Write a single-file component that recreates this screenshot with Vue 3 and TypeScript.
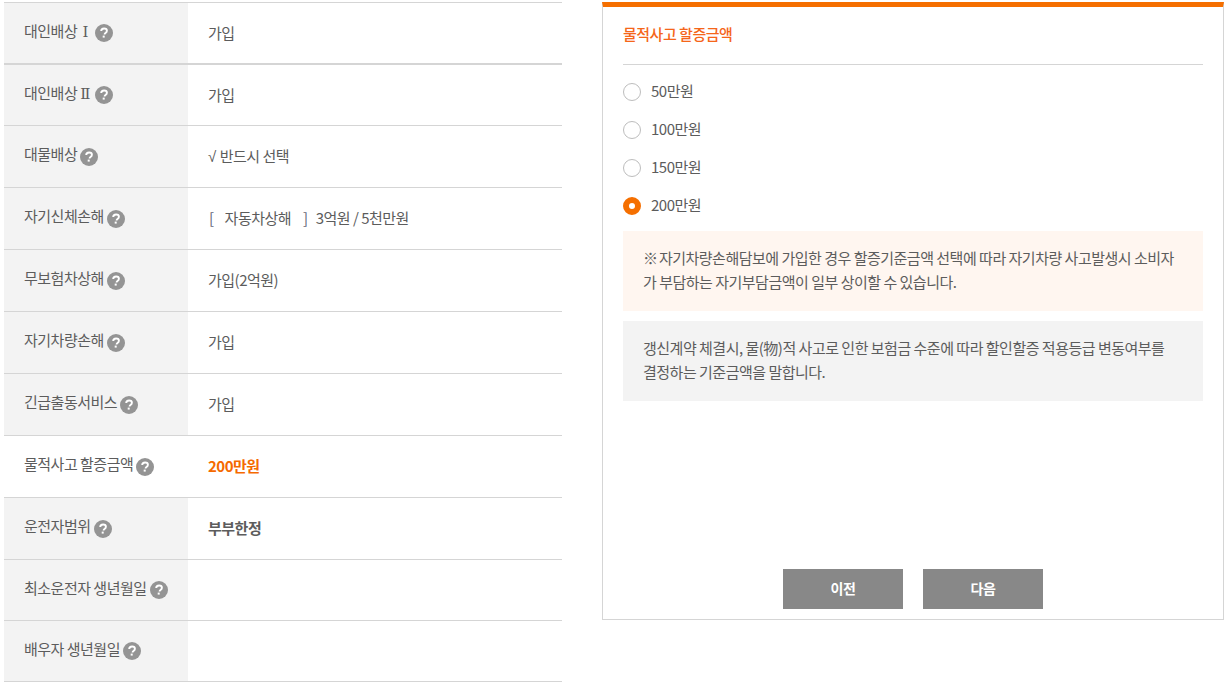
<script setup lang="ts">
interface Row { label: string; num?: string; value: string; kind?: string; h: number; thick?: boolean; white?: boolean }
const rows: Row[] = [
  { label: '대인배상', num: 'Ⅰ', value: '가입', h: 62, thick: true },
  { label: '대인배상', num: 'Ⅱ', value: '가입', h: 61 },
  { label: '대물배상', value: '반드시 선택', kind: 'check', h: 62 },
  { label: '자기신체손해', value: '', kind: 'bracket', h: 62 },
  { label: '무보험차상해', value: '가입(2억원)', h: 62 },
  { label: '자기차량손해', value: '가입', h: 62 },
  { label: '긴급출동서비스', value: '가입', h: 62 },
  { label: '물적사고 할증금액', value: '200만원', kind: 'orange', h: 62, white: true },
  { label: '운전자범위', value: '부부한정', kind: 'bold', h: 62 },
  { label: '최소운전자 생년월일', value: '', h: 61 },
  { label: '배우자 생년월일', value: '', h: 61 },
]
const options = [
  { label: '50만원', checked: false },
  { label: '100만원', checked: false },
  { label: '150만원', checked: false },
  { label: '200만원', checked: true },
]
</script>

<template>
  <div class="page">
    <div class="table">
      <div
        v-for="r in rows"
        :key="r.label + (r.num || '')"
        class="row"
        :class="{ thick: r.thick }"
        :style="{ height: r.h + 'px' }"
      >
        <div class="th" :class="{ white: r.white }">
          <span class="lab">{{ r.label }}<span v-if="r.num" class="num">{{ r.num }}</span></span>
          <svg class="q" width="18" height="18" viewBox="0 0 18 18">
            <circle cx="9" cy="9" r="9" fill="#949494" />
            <path d="M6.2 7.1c0-1.6 1.2-2.6 2.9-2.6s2.8 1 2.8 2.3c0 1-.5 1.6-1.4 2.2-.7.5-.9.7-.9 1.5" fill="none" stroke="#fff" stroke-width="1.9" />
            <rect x="7.7" y="11.6" width="2" height="2" fill="#fff" />
          </svg>
        </div>
        <div class="td" :class="r.kind">
          <span v-if="r.kind === 'bracket'" class="val">
            <span class="br">[</span><span class="in">자동차상해</span><span class="br">]</span><span class="after">3억원 / 5천만원</span>
          </span>
          <span v-else-if="r.kind === 'check'" class="val"><span class="chk">√</span>{{ r.value }}</span>
          <span v-else class="val">{{ r.value }}</span>
        </div>
      </div>
    </div>

    <section class="panel">
      <h2 class="title">물적사고 할증금액</h2>
      <div class="opts">
        <label v-for="o in options" :key="o.label" class="opt">
          <span class="radio" :class="{ on: o.checked }"></span>
          <span class="opt-text">{{ o.label }}</span>
        </label>
      </div>
      <div class="note warm"><span class="mark">※</span> 자기차량손해담보에 가입한 경우 할증기준금액 선택에 따라 자기차량 사고발생시 소비자<br />가 부담하는 자기부담금액이 일부 상이할 수 있습니다.</div>
      <div class="note gray">갱신계약 체결시, 물(物)적 사고로 인한 보험금 수준에 따라 할인할증 적용등급 변동여부를<br />결정하는 기준금액을 말합니다.</div>
      <div class="btns">
        <button class="btn">이전</button>
        <button class="btn">다음</button>
      </div>
    </section>
  </div>
</template>

<style>
html, body { margin: 0; background: #fff; }
</style>

<style scoped>
.page {
  display: flex;
  align-items: flex-start;
  width: 1232px;
  height: 689px;
  padding: 2px 0 0 4px;
  box-sizing: border-box;
  overflow: hidden;
  font-family: "Noto Sans CJK KR", "Noto Sans", sans-serif;
  font-size: 15px;
  letter-spacing: -0.5px;
  color: #5c5c5c;
}
.table {
  width: 558px;
  border-top: 1px solid #d5d5d5;
  flex: none;
}
.row {
  display: flex;
  box-sizing: border-box;
  border-bottom: 1px solid #d5d5d5;
}
.row.thick { border-bottom-width: 2px; }
.th {
  width: 184px;
  flex: none;
  background: #f3f3f3;
  display: flex;
  align-items: center;
  padding: 0 0 0 20px;
  box-sizing: border-box;
  gap: 3px;
}
.th.white { background: #fff; }
.lab { position: relative; top: -3px; }
.num {
  display: inline-block;
  width: 14px;
  margin-left: 1px;
  text-align: center;
  font-family: "DejaVu Serif", serif;
}
.q { flex: none; }
.td {
  flex: 1;
  display: flex;
  align-items: center;
  padding-left: 20px;
  white-space: pre;
}
.val { position: relative; top: -1px; }
.td.orange { color: #f56a00; font-weight: 700; }
.td.bold { font-weight: 700; }
.chk {
  font-family: "Liberation Sans", sans-serif;
  margin-right: 4px;
}
.br { color: #667; margin-left: 1px; }
.in { margin: 0 11px 0 11px; }
.after { margin-left: 8px; }
.panel {
  width: 622px;
  height: 618px;
  flex: none;
  margin-left: 40px;
  box-sizing: border-box;
  border: 1px solid #d5d5d5;
  border-top: 5px solid #f56f00;
  padding: 0 20px;
  display: flex;
  flex-direction: column;
}
.title {
  margin: 0;
  height: 58px;
  line-height: 54px;
  border-bottom: 1px solid #d5d5d5;
  font-size: 15px;
  font-weight: 500;
  color: #f5661a;
  box-sizing: border-box;
  flex: none;
}
.opts { display: flex; flex-direction: column; padding-top: 8px; }
.opt {
  height: 38px;
  display: flex;
  align-items: center;
  gap: 10px;
}
.opt-text { position: relative; top: -2px; }
.radio {
  width: 18px;
  height: 18px;
  box-sizing: border-box;
  border: 1px solid #bdbdbd;
  border-radius: 50%;
  background: #fff;
}
.radio.on {
  border: 6px solid #f56f00;
}
.note {
  padding: 15px 20px 0;
  height: 80px;
  box-sizing: border-box;
  line-height: 24px;
  flex: none;
  white-space: nowrap;
}
.mark { margin-right: -1.5px; }
.warm { background: #fff6f0; margin-top: 6px; }
.gray { background: #f3f3f3; margin-top: 10px; }
.btns {
  margin-top: auto;
  margin-bottom: 10px;
  display: flex;
  justify-content: center;
  gap: 20px;
}
.btn {
  width: 120px;
  height: 40px;
  border: 0;
  padding: 0 0 2px;
  background: #888;
  color: #fff;
  font: inherit;
  font-size: 14px;
  font-weight: 700;
  letter-spacing: inherit;
}
</style>
